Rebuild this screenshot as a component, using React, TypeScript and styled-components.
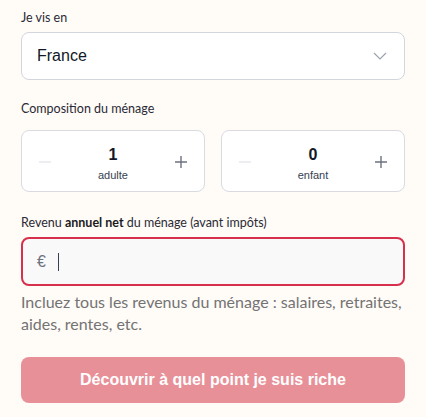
import React, { useState } from "react";
import styled, { createGlobalStyle } from "styled-components";

const GlobalStyle = createGlobalStyle`
    html, body {
        margin: 0;
        padding: 0;
        background: #fffbf7;
    }
    * { box-sizing: border-box; }
`;

interface CounterProps {
    value: number;
    label: string;
    min?: number;
}

const Counter = ({ value, label, min = 0 }: CounterProps) => {
    const [count, setCount] = useState<number>(value);
    const canDecrement = count > min;

    return (
        <CounterBox>
            <StepButton
                aria-label="moins"
                disabled={!canDecrement}
                onClick={() => canDecrement && setCount(count - 1)}
            >
                <svg width="14" height="14" viewBox="0 0 14 14">
                    <path d="M1 7h12" stroke="currentColor" strokeWidth="1.4" />
                </svg>
            </StepButton>
            <CounterValue>
                <Count>{count}</Count>
                <CountLabel>{label}</CountLabel>
            </CounterValue>
            <StepButton aria-label="plus" onClick={() => setCount(count + 1)}>
                <svg width="14" height="14" viewBox="0 0 14 14">
                    <path d="M1 7h12M7 1v12" stroke="currentColor" strokeWidth="1.4" />
                </svg>
            </StepButton>
        </CounterBox>
    );
};

export default () => {
    return (
        <Page>
            <GlobalStyle />
            <Field gapAfter={19}>
                <Label>Je vis en</Label>
                <Select>
                    <span>France</span>
                    <svg width="14" height="8" viewBox="0 0 14 8">
                        <path d="M1 1l6 6 6-6" fill="none" stroke="#9ca3af" strokeWidth="1.2" />
                    </svg>
                </Select>
            </Field>
            <Field gapAfter={21}>
                <Label>Composition du ménage</Label>
                <CounterRow>
                    <Counter value={1} min={1} label="adulte" />
                    <Counter value={0} label="enfant" />
                </CounterRow>
            </Field>
            <Field gapAfter={22}>
                <Label>
                    Revenu <strong>annuel net</strong> du ménage (avant impôts)
                </Label>
                <IncomeInput>
                    <Currency>€</Currency>
                    <Caret />
                </IncomeInput>
                <Hint>Incluez tous les revenus du ménage : salaires, retraites, aides, rentes, etc.</Hint>
            </Field>
            <SubmitButton>Découvrir à quel point je suis riche</SubmitButton>
        </Page>
    );
};

const Page = styled.div`
    width: 426px;
    padding: 8px 21px 0 21px;
    display: flex;
    flex-direction: column;
    font-family: Lato, "Noto Sans", sans-serif;
`;

const Field = styled.div<{ gapAfter: number }>`
    display: flex;
    flex-direction: column;
    margin-bottom: ${(props) => props.gapAfter}px;
`;

const Label = styled.div`
    font-size: 12.5px;
    line-height: 20px;
    color: #2a2a35;
    margin-bottom: 4px;

    strong {
        font-weight: 700;
        color: #1a1a22;
    }
`;

const Select = styled.div`
    height: 48px;
    display: flex;
    align-items: center;
    justify-content: space-between;
    padding: 0 17px 0 15px;
    background: #ffffff;
    border: 1px solid #d4d6dd;
    border-radius: 8px;
    font-family: "Liberation Sans", Arial, sans-serif;
    font-size: 16px;
    color: #111827;
`;

const CounterRow = styled.div`
    display: grid;
    grid-template-columns: 1fr 1fr;
    gap: 16px;
    margin-top: 7px;
`;

const CounterBox = styled.div`
    height: 62px;
    display: flex;
    align-items: center;
    justify-content: space-between;
    padding: 0 16px;
    background: #ffffff;
    border: 1px solid #d9dbe1;
    border-radius: 8px;
`;

const StepButton = styled.button`
    width: 14px;
    height: 14px;
    margin-top: 2px;
    padding: 0;
    border: none;
    background: none;
    display: flex;
    color: #6b7280;
    cursor: pointer;

    &:disabled {
        color: #e5e7eb;
        cursor: default;
    }
`;

const CounterValue = styled.div`
    display: flex;
    flex-direction: column;
    align-items: center;
    padding-top: 6px;
    font-family: "Liberation Sans", Arial, sans-serif;
`;

const Count = styled.span`
    font-size: 16px;
    font-weight: 700;
    line-height: 20px;
    color: #111827;
`;

const CountLabel = styled.span`
    margin-top: 2px;
    font-size: 11px;
    line-height: 16px;
    color: #374151;
`;

const IncomeInput = styled.div`
    height: 49px;
    display: flex;
    align-items: center;
    gap: 8px;
    padding: 0 14px;
    background: #f9f9fa;
    border: 2px solid #d6304d;
    border-radius: 8px;
`;

const Currency = styled.span`
    font-family: "Liberation Sans", Arial, sans-serif;
    font-size: 16px;
    color: #6b7280;
`;

const Caret = styled.span`
    width: 1px;
    height: 18px;
    background: #374151;
    margin-left: 4px;
`;

const Hint = styled.p`
    margin: 5px 0 0 0;
    font-size: 16px;
    line-height: 22px;
    color: #737373;
`;

const SubmitButton = styled.button`
    height: 46px;
    border: none;
    border-radius: 8px;
    background: #e89098;
    color: #ffffff;
    font-family: "Liberation Sans", Arial, sans-serif;
    font-size: 16px;
    font-weight: 700;
`;
